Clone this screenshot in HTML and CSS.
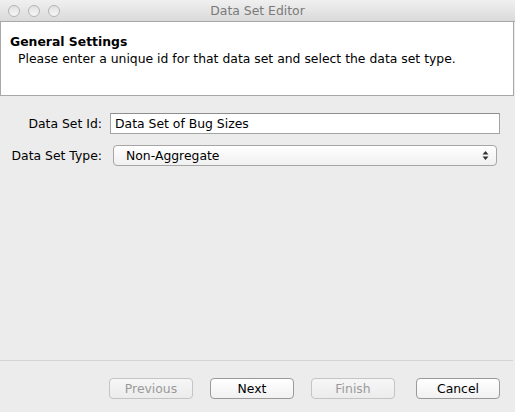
FILE: index.html
```html
<!DOCTYPE html>
<html>
<head>
<meta charset="utf-8">
<link rel="stylesheet" href="styles.css">
</head>
<body>
<div class="window">
  <div class="titlebar">
    <div class="lights">
      <span class="light"></span><span class="light"></span><span class="light"></span>
    </div>
    <div class="title">Data Set Editor</div>
  </div>
  <div class="header">
    <div class="h-title">General Settings</div>
    <div class="h-desc">Please enter a unique id for that data set and select the data set type.</div>
  </div>
  <div class="form">
    <div class="row">
      <label class="lbl">Data Set Id:</label>
      <div class="field">Data Set of Bug Sizes</div>
    </div>
    <div class="row row2">
      <label class="lbl">Data Set Type:</label>
      <div class="select">
        <span>Non-Aggregate</span>
        <svg class="arrows" width="7" height="11" viewBox="0 0 7 11"><path d="M3.5 1 L6.5 4.5 L0.5 4.5 Z M3.5 10 L6.5 6.5 L0.5 6.5 Z" fill="#333"/></svg>
      </div>
    </div>
  </div>
  <div class="sep"></div>
  <div class="buttons">
    <div class="btn disabled">Previous</div>
    <div class="btn">Next</div>
    <div class="btn disabled">Finish</div>
    <div class="btn cancel">Cancel</div>
  </div>
</div>
</body>
</html>
```
FILE: styles.css
```css
html, body {
  margin: 0;
  padding: 0;
  background: #ececec;
}
.window {
  width: 515px;
  height: 412px;
  display: flex;
  flex-direction: column;
  font-family: "DejaVu Sans", "Liberation Sans", sans-serif;
  font-size: 12.4px;
  color: #000;
  background: #ececec;
}
.titlebar {
  height: 22px;
  box-sizing: border-box;
  border-bottom: 1px solid #a8a8a8;
  background: linear-gradient(#f0f0f0, #dadada);
  display: flex;
  align-items: center;
  position: relative;
}
.lights {
  display: flex;
  gap: 8px;
  padding-left: 8px;
}
.light {
  width: 10px;
  height: 10px;
  border-radius: 50%;
  border: 1px solid #b4b4b4;
  background: linear-gradient(#e2e2e2, #f6f6f6);
}
.title {
  position: absolute;
  left: 0;
  right: 0;
  text-align: center;
  color: #7a7a7a;
  font-size: 12.4px;
}
.header {
  height: 74px;
  box-sizing: border-box;
  background: #fff;
  border: 1px solid #a8a8a8;
  border-top: none;
  margin-right: 1px;
  padding: 12px 0 0 9px;
}
.h-title {
  font-weight: bold;
  line-height: 16px;
}
.h-desc {
  padding-left: 8px;
  line-height: 16px;
  margin-top: 1px;
}
.form {
  flex: 1;
  padding-top: 17px;
}
.row {
  display: flex;
  align-items: center;
  height: 21px;
}
.row2 {
  margin-top: 11px;
}
.lbl {
  width: 102px;
  text-align: right;
  flex: none;
}
.field {
  margin-left: 8px;
  width: 390px;
  height: 21px;
  box-sizing: border-box;
  border: 1px solid #a3a3a3;
  border-top-color: #8e8e8e;
  background: #fff;
  padding: 0 4px;
  line-height: 19px;
}
.select {
  margin-left: 11px;
  width: 384px;
  height: 21px;
  box-sizing: border-box;
  border: 1px solid #a6a6a6;
  border-radius: 4px;
  background: linear-gradient(#ffffff, #f0f0f0);
  display: flex;
  align-items: center;
  justify-content: space-between;
  padding: 0 7px 0 12px;
}
.sep {
  height: 1px;
  background: #d4d4d4;
  margin-right: 2px;
}
.buttons {
  height: 51px;
  display: flex;
  justify-content: flex-end;
  align-items: flex-start;
  gap: 17px;
  padding: 17px 15px 0 0;
  box-sizing: border-box;
}
.btn {
  width: 84px;
  height: 21px;
  box-sizing: border-box;
  border: 1px solid #9a9a9a;
  border-radius: 4px;
  background: linear-gradient(#ffffff, #f1f1f1);
  text-align: center;
  line-height: 19px;
}
.btn.cancel {
  margin-left: 4px;
}
.btn.disabled {
  color: #9a9a9a;
  border-color: #c4c4c4;
  background: linear-gradient(#f6f6f6, #ececec);
}
```
